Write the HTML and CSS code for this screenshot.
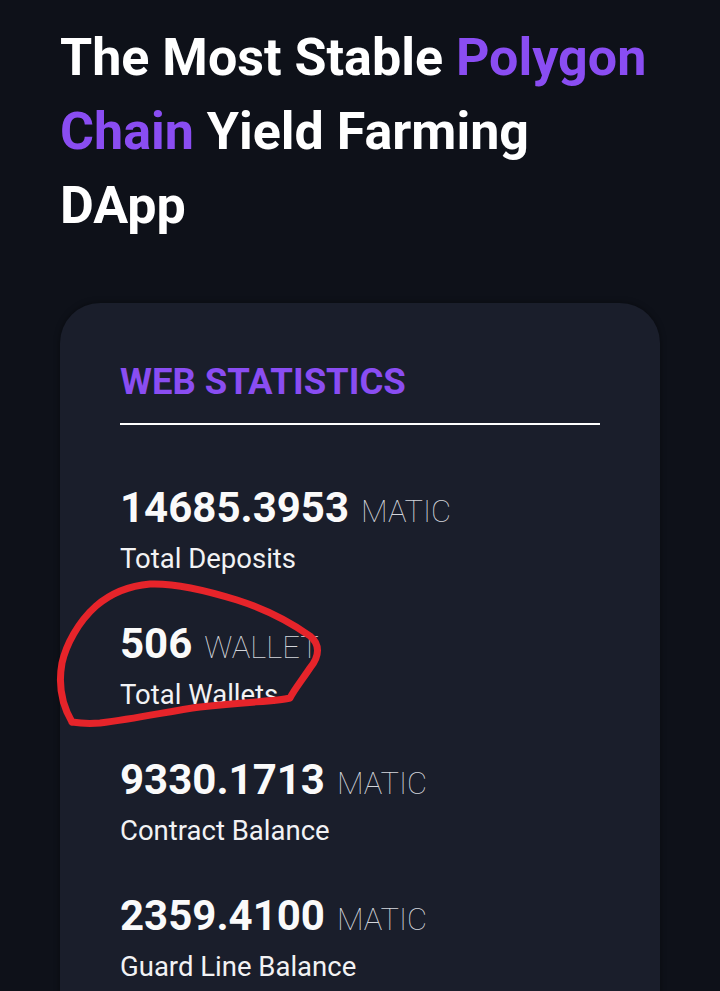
FILE: index.html
```html
<!DOCTYPE html>
<html lang="en">
<head>
  <meta charset="UTF-8">
  <title>Polygon Yield Farming DApp</title>
  <link rel="stylesheet" href="styles.css">
</head>
<body>
  <div id="page">
    <h1 class="hero-title">The Most Stable <span class="accent">Polygon Chain</span> Yield Farming DApp</h1>

    <!-- stats card -->
    <div class="stats-card">
      <h2 class="stats-title">WEB STATISTICS</h2>
      <div class="stats-rule"></div>

      <div class="stat">
        <div class="stat-value"><span class="num">14685.3953</span><span class="unit">MATIC</span></div>
        <div class="stat-label">Total Deposits</div>
      </div>
      <div class="stat">
        <div class="stat-value"><span class="num">506</span><span class="unit">WALLET</span></div>
        <div class="stat-label">Total Wallets</div>
      </div>
      <div class="stat">
        <div class="stat-value"><span class="num">9330.1713</span><span class="unit">MATIC</span></div>
        <div class="stat-label">Contract Balance</div>
      </div>
      <div class="stat">
        <div class="stat-value"><span class="num">2359.4100</span><span class="unit">MATIC</span></div>
        <div class="stat-label">Guard Line Balance</div>
      </div>
    </div>

    <!-- hand drawn marker over the wallets row -->
    <svg class="scribble" width="720" height="991" viewBox="0 0 720 991">
      <path d="M72 722 C62 705 58 685 62 663 C66 645 78 622 96 606 C110 594 126 586 150 584 C175 583 205 590 237 600 C262 608 290 622 310 636 C320 644 320 656 310 668 C302 680 294 690 290 698 C275 702 250 701 200 707 C170 711 140 718 100 723 C88 724 78 723 72 722" fill="none" stroke="#e6242a" stroke-width="7" stroke-linecap="round" stroke-linejoin="round"/>
    </svg>
  </div>
</body>
</html>
```

FILE: styles.css
```css
body {
  margin: 0;
  background-color: #0e1119;
  font-family: Roboto, "Liberation Sans", Arial, sans-serif;
  color: #fff;
  overflow: hidden;
}

#page {
  position: relative;
  padding: 21px 60px 0 60px;
}

.hero-title {
  margin: 0;
  font-size: 52px;
  line-height: 74px;
  font-weight: 700;
  color: #fff;
}

.accent {
  color: #8a4df2;
}

.stats-card {
  margin-top: 60px;
  width: 480px;
  padding: 57px 60px 80px 60px;
  background-color: #1a1e2b;
  border-radius: 40px;
  box-shadow: 0 0 6px rgba(0, 0, 0, 0.4);
}

.stats-title {
  margin: 0;
  font-size: 36.5px;
  line-height: 43px;
  font-weight: 700;
  color: #8a4df2;
}

.stats-rule {
  height: 2px;
  margin-top: 20px;
  margin-bottom: 59px; /* collapses with .stat margin */
  background-color: #fff;
}

.stat {
  margin-top: 45px;
}

.stat-value {
  display: flex;
  align-items: baseline;
  gap: 12px;
  line-height: 48px;
}

.num {
  font-size: 42px;
  font-weight: 700;
  color: #fafafa;
}

.unit {
  font-size: 31px;
  font-weight: 100;
  color: #d4d6dc;
}

.stat-label {
  margin-top: 7px;
  font-size: 27.5px;
  line-height: 32px;
  color: #f2f2f4;
}

.scribble {
  position: absolute;
  top: 0;
  left: 0;
  pointer-events: none;
}
```
